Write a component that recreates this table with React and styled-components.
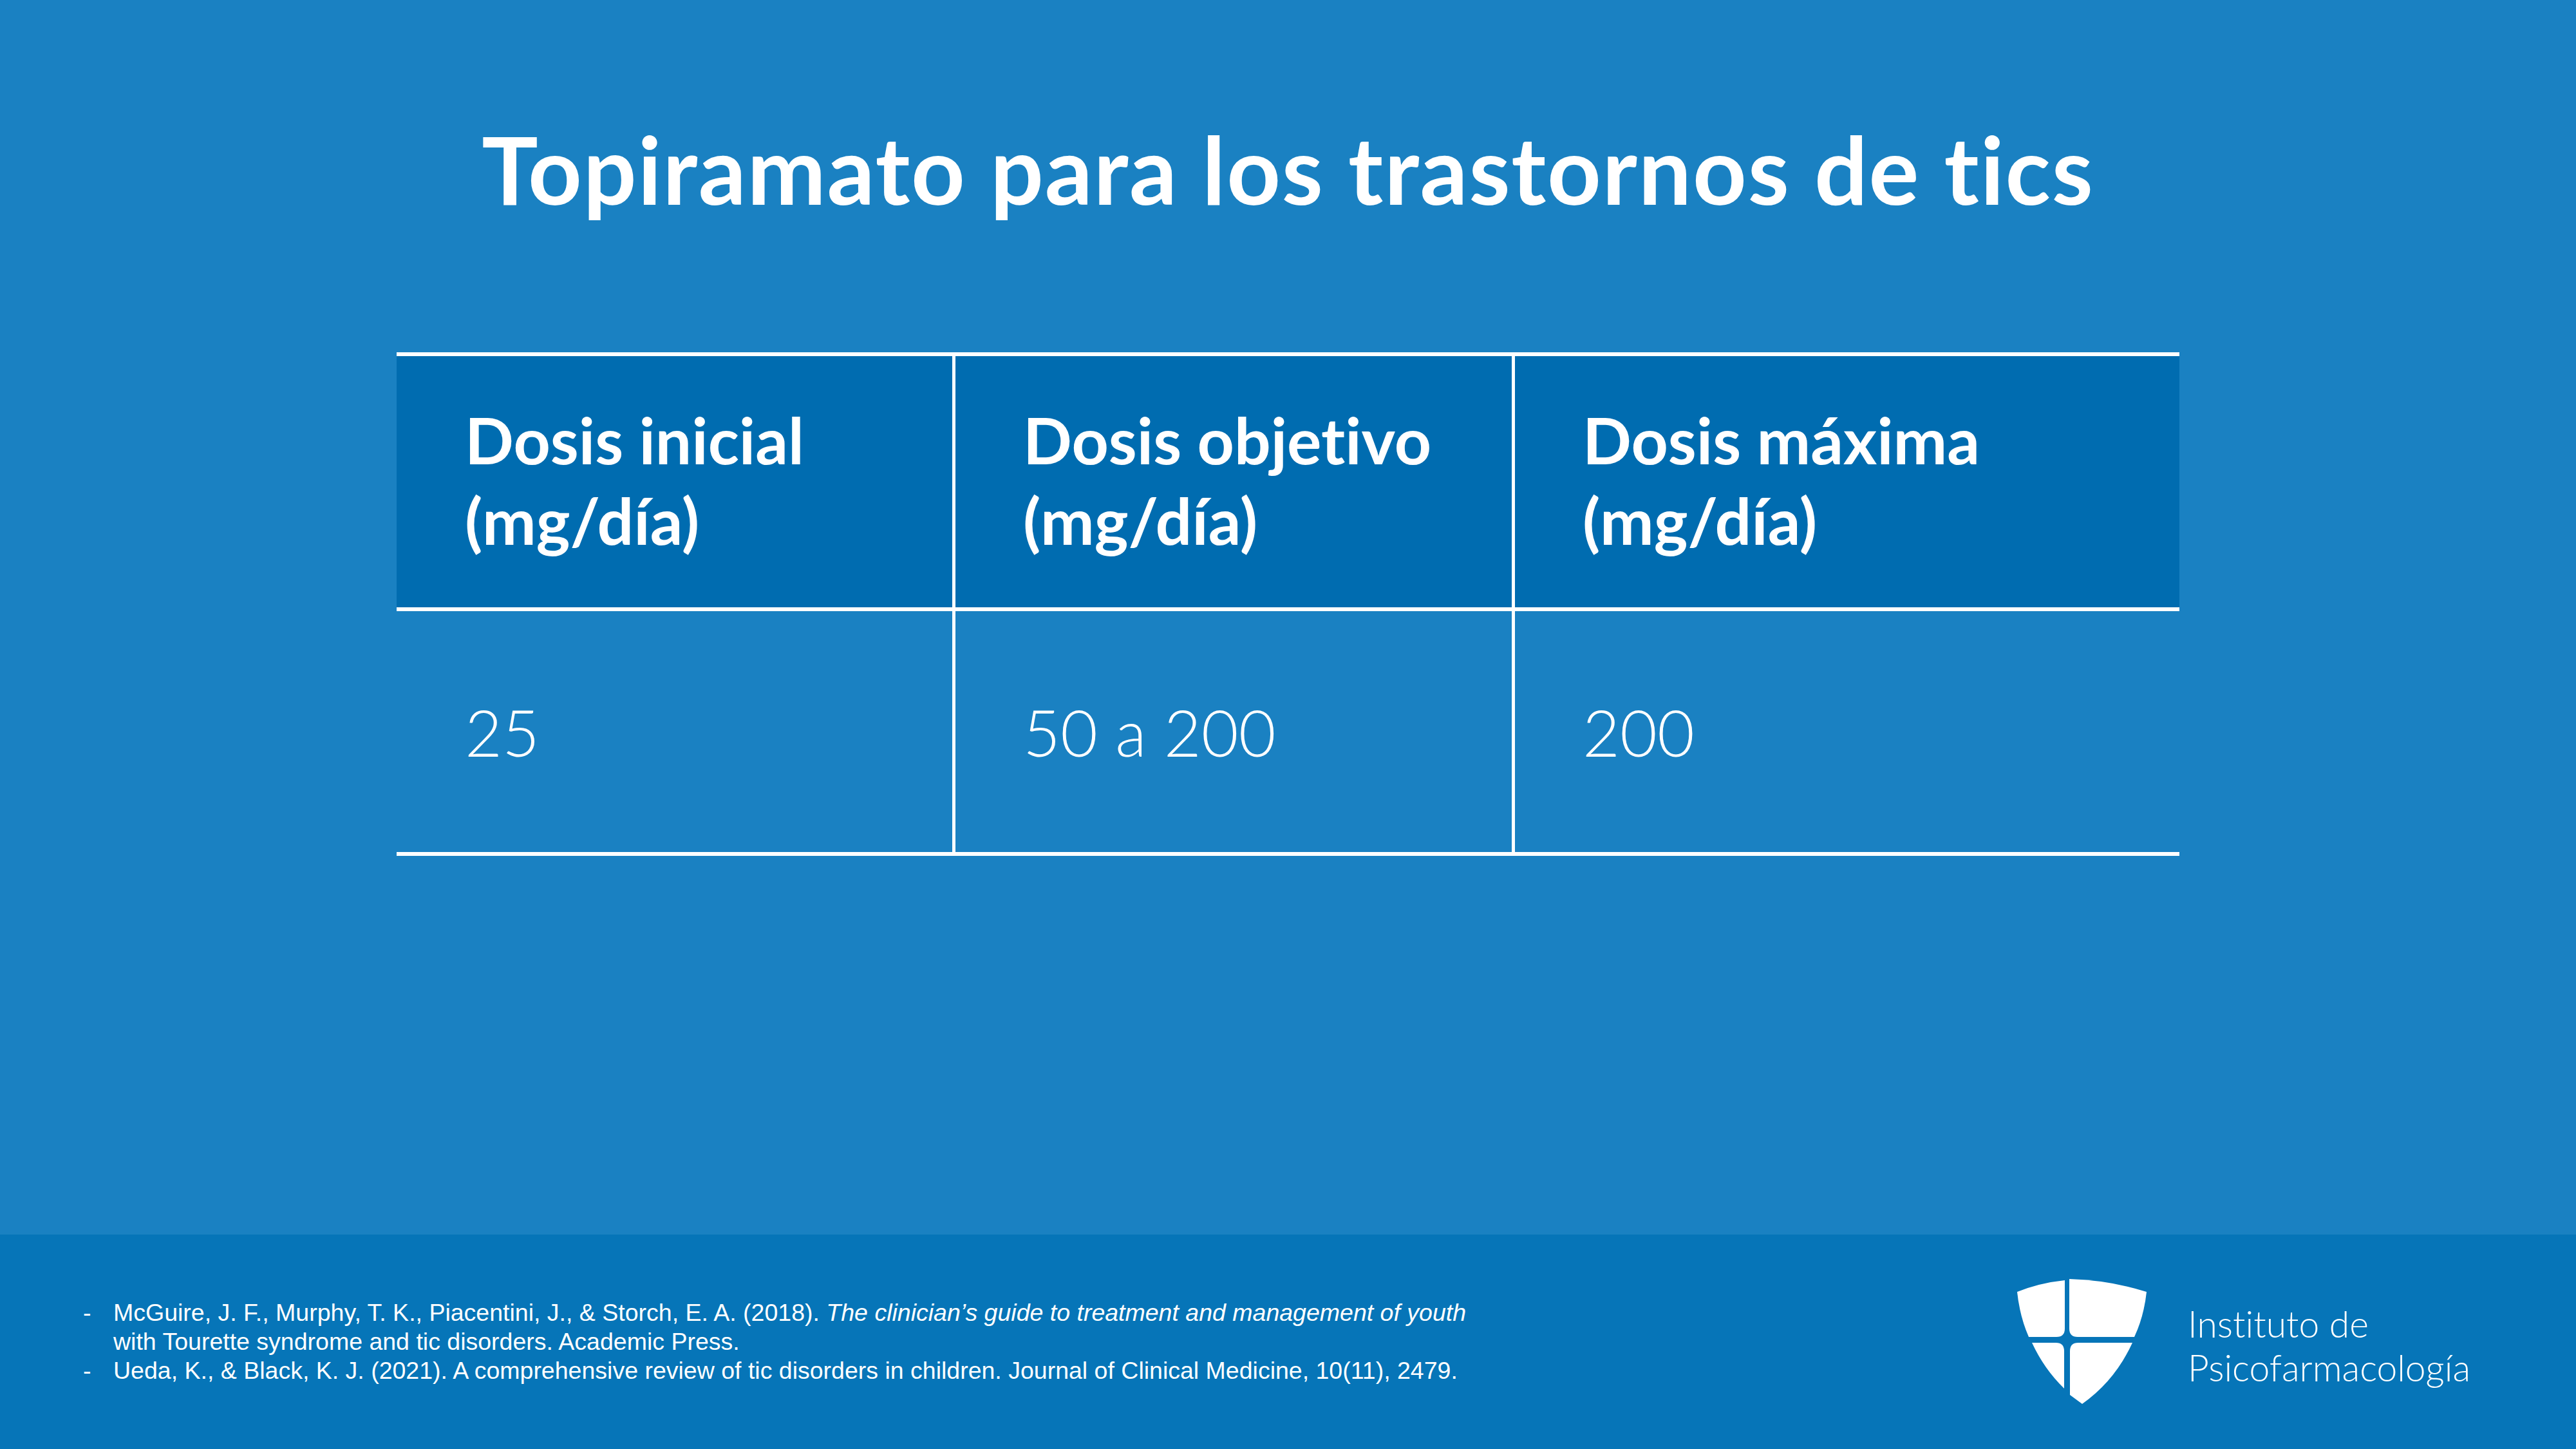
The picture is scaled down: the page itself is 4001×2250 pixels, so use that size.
import React from 'react';
import styled, { createGlobalStyle } from 'styled-components';

const GlobalStyle = createGlobalStyle`
  html, body {
    margin: 0;
    padding: 0;
    overflow: hidden;
  }
  * {
    box-sizing: border-box;
    font-variant-ligatures: none;
  }
`;

const Slide = styled.div`
  width: 4001px;
  height: 2250px;
  display: flex;
  flex-direction: column;
  background-color: #1a81c2;
  color: #fff;
`;

const Main = styled.main`
  flex: 1;
  display: flex;
  flex-direction: column;
  align-items: center;
  padding-top: 174px;
`;

const Title = styled.h1`
  margin: 0;
  font-family: Lato, 'Open Sans', sans-serif;
  font-weight: 700;
  font-size: 146px;
  line-height: 175px;
  letter-spacing: 1.8px;
  white-space: nowrap;
`;

const Table = styled.div`
  margin-top: 198px;
  width: 2769px;
  display: grid;
  grid-template-columns: 863px 869px 1037px;
  border-top: 6px solid #fff;
  border-bottom: 6px solid #fff;
`;

const Cell = styled.div`
  display: flex;
  align-items: center;
  padding-left: ${(props) => (props.first ? 106 : 105)}px;
  border-left: ${(props) => (props.first ? 'none' : '5px solid #fff')};
  font-family: Lato, 'Open Sans', sans-serif;
  font-size: 100px;
`;

const HeadCell = styled(Cell)`
  height: 396px;
  padding-bottom: 6px;
  background-color: #006cb0;
  border-bottom: 6px solid #fff;
  font-weight: 700;
  line-height: 125px;
`;

const BodyCell = styled(Cell)`
  height: 374px;
  font-weight: 300;
  line-height: 120px;
`;

const Footer = styled.footer`
  height: 333px;
  flex-shrink: 0;
  display: flex;
  align-items: center;
  justify-content: space-between;
  padding: 0 164px 0 129px;
  background-color: #0675b8;
`;

const Refs = styled.ul`
  list-style: none;
  margin: 0;
  padding: 0;
  font-family: 'Liberation Sans', Arial, sans-serif;
  font-size: 37.5px;
  line-height: 45px;
`;

const RefItem = styled.li`
  display: flex;
  white-space: nowrap;
`;

const Dash = styled.span`
  width: 47px;
  flex-shrink: 0;
`;

const Logo = styled.div`
  display: flex;
  align-items: center;
  gap: 63px;
`;

const LogoText = styled.div`
  padding-top: 10px;
  font-family: Lato, 'Open Sans', sans-serif;
  font-weight: 300;
  font-size: 57px;
  line-height: 68px;
`;

function Shield() {
  return (
    <svg width="202" height="195" viewBox="0 0 202 195" fill="#fff">
      <path d="M0 20 Q35 6 74 2 L74 77 Q74 90 61 90 L18 90 Q4 58 0 20 Z" />
      <path d="M81 0 Q145 2 201 20 Q197 58 182 90 L94 90 Q81 90 81 77 Z" />
      <path d="M23 99 L60 99 Q73 99 73 112 L73 170 Q42 140 23 99 Z" />
      <path d="M95 99 L179 99 Q152 158 101 194 L82 180 L82 112 Q82 99 95 99 Z" />
    </svg>
  );
}

const headers = [
  ['Dosis inicial', '(mg/día)'],
  ['Dosis objetivo', '(mg/día)'],
  ['Dosis máxima', '(mg/día)'],
];

const values = ['25', '50 a 200', '200'];

export default function App() {
  return (
    <>
      <GlobalStyle />
      <Slide>
        <Main>
          <Title>Topiramato para los trastornos de tics</Title>
          <Table>
            {headers.map(([a, b], i) => (
              <HeadCell key={a} first={i === 0}>
                <div>
                  {a}
                  <br />
                  {b}
                </div>
              </HeadCell>
            ))}
            {values.map((v, i) => (
              <BodyCell key={v} first={i === 0}>
                {v}
              </BodyCell>
            ))}
          </Table>
        </Main>
        <Footer>
          <Refs>
            <RefItem>
              <Dash>-</Dash>
              <span>
                McGuire, J. F., Murphy, T. K., Piacentini, J., &amp; Storch, E. A. (2018).{' '}
                <i>The clinician’s guide to treatment and management of youth</i>
                <br />
                with Tourette syndrome and tic disorders. Academic Press.
              </span>
            </RefItem>
            <RefItem>
              <Dash>-</Dash>
              <span>
                Ueda, K., &amp; Black, K. J. (2021). A comprehensive review of tic disorders in
                children. Journal of Clinical Medicine, 10(11), 2479.
              </span>
            </RefItem>
          </Refs>
          <Logo>
            <Shield />
            <LogoText>
              Instituto de
              <br />
              Psicofarmacología
            </LogoText>
          </Logo>
        </Footer>
      </Slide>
    </>
  );
}
